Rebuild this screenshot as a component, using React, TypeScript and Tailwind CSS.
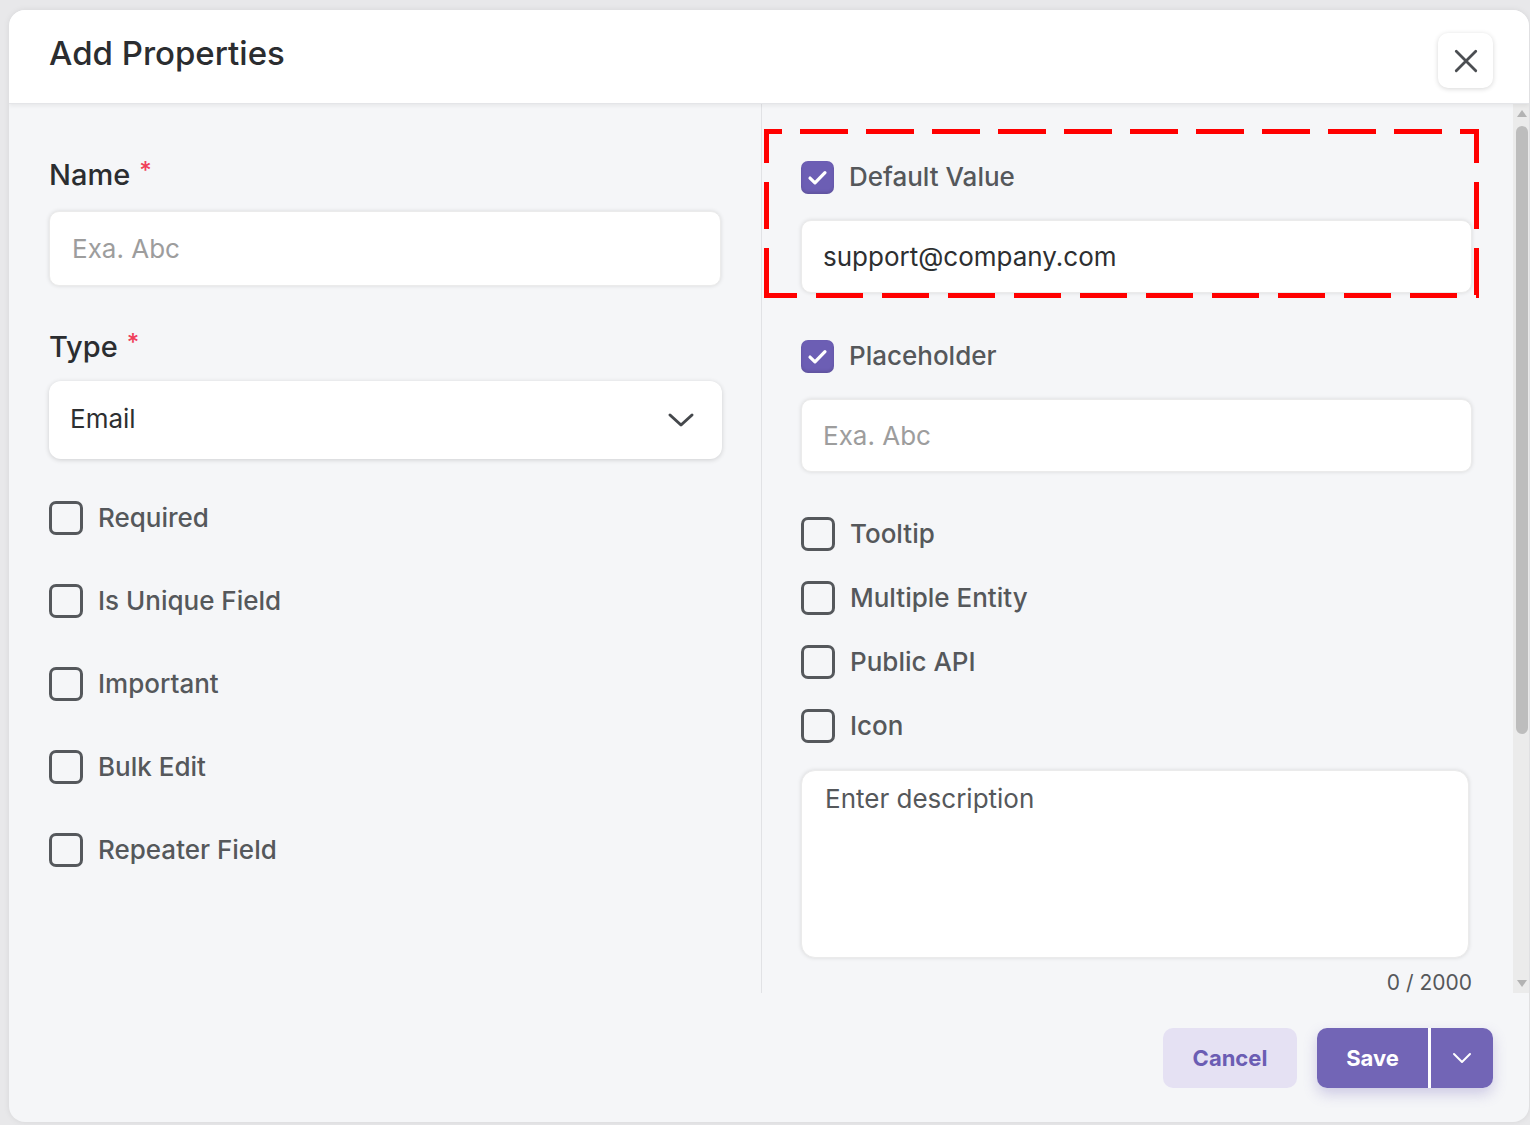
import { useState } from 'react'

const font = { fontFamily: 'Inter, "Noto Sans", sans-serif' }

function CheckIcon() {
  return (
    <svg className="w-[23px] h-[23px]" viewBox="0 0 20 20" fill="none" stroke="white" strokeWidth="2.8" strokeLinecap="round" strokeLinejoin="round">
      <path d="M3.5 10.5l4.3 4.2L16.5 5.8" />
    </svg>
  )
}

function Checkbox({ label, checked, onToggle }: { label: string; checked: boolean; onToggle: () => void }) {
  return (
    <button onClick={onToggle} className="flex items-center h-[34px] text-left">
      {checked ? (
        <span className="w-[33px] h-[33px] rounded-[7px] bg-[#6c5eb4] flex items-center justify-center shadow-[inset_0_-2px_3px_rgba(0,0,0,0.12)]">
          <CheckIcon />
        </span>
      ) : (
        <span className="w-[34px] h-[34px] rounded-[7px] border-[3px] border-[#55585c] bg-transparent" />
      )}
      <span className="ml-[15px] text-[26px] leading-[34px] font-medium text-[#55585b]">{label}</span>
    </button>
  )
}

function Field({ label }: { label: string }) {
  return (
    <div className="h-[36px] flex items-start text-[29px] leading-[36px] font-medium text-[#2b2d30]">
      {label}
      <span className="ml-[9px] text-[24px] leading-[28px] text-[#f0405a]">*</span>
    </div>
  )
}

export default function App() {
  const [checks, setChecks] = useState<Record<string, boolean>>({
    required: false,
    unique: false,
    important: false,
    bulk: false,
    repeater: false,
    defaultValue: true,
    placeholder: true,
    tooltip: false,
    multiple: false,
    publicApi: false,
    icon: false,
  })
  const toggle = (k: string) => setChecks(prev => ({ ...prev, [k]: !prev[k] }))

  const left = [
    { key: 'required', label: 'Required' },
    { key: 'unique', label: 'Is Unique Field' },
    { key: 'important', label: 'Important' },
    { key: 'bulk', label: 'Bulk Edit' },
    { key: 'repeater', label: 'Repeater Field' },
  ]
  const right = [
    { key: 'tooltip', label: 'Tooltip' },
    { key: 'multiple', label: 'Multiple Entity' },
    { key: 'publicApi', label: 'Public API' },
    { key: 'icon', label: 'Icon' },
  ]

  return (
    <div className="w-[1530px] h-[1125px] bg-[#e8e8ea] pt-[10px] pl-[9px] pr-[1px] pb-[3px] overflow-hidden" style={font}>
      <div className="h-[1112px] w-[1520px] rounded-[16px] bg-[#f5f6f8] overflow-hidden flex flex-col shadow-[0_0_6px_rgba(0,0,0,0.08)]">
        {/* Header */}
        <div className="h-[94px] shrink-0 bg-white border-b border-[#e4e5e8] shadow-[0_2px_4px_rgba(0,0,0,0.06)] flex items-center justify-between pl-[40px] pr-[36px] relative z-10">
          <h2 className="text-[33px] font-medium text-[#2b2d30] -mt-[6px]">Add Properties</h2>
          <button className="w-[55px] h-[55px] mt-[8px] rounded-[10px] bg-white shadow-[0_1px_5px_rgba(0,0,0,0.16)] flex items-center justify-center">
            <svg className="w-[26px] h-[26px]" viewBox="0 0 24 24" fill="none" stroke="#4b4e52" strokeWidth="2.6" strokeLinecap="round">
              <path d="M3 3l18 18M21 3L3 21" />
            </svg>
          </button>
        </div>

        {/* Body */}
        <div className="h-[889px] shrink-0 flex">
          <div className="pl-[40px] w-[712px] shrink-0 pt-[53px]">
            <Field label="Name" />
            <input
              placeholder="Exa. Abc"
              className="mt-[18px] w-[672px] h-[75px] rounded-[10px] bg-white border border-[#ebebeb] shadow-[0_0_4px_rgba(0,0,0,0.12)] px-[22px] text-[26px] text-[#2d2f31] placeholder:text-[#9d9d9d] outline-none"
            />
            <div className="mt-[43px]">
              <Field label="Type" />
            </div>
            <div className="mt-[16px] w-[673px] h-[78px] rounded-[12px] bg-white shadow-[0_1px_5px_rgba(0,0,0,0.16)] flex items-center justify-between pl-[21px] pr-[27px]">
              <span className="text-[26px] text-[#2d2f31] -mt-[4px]">Email</span>
              <svg className="w-[28px] h-[18px]" viewBox="0 0 28 18" fill="none" stroke="#45484c" strokeWidth="3" strokeLinecap="round" strokeLinejoin="round">
                <path d="M3 4l11 10L25 4" />
              </svg>
            </div>
            <div className="mt-[42px] flex flex-col gap-[49px]">
              {left.map(c => (
                <Checkbox key={c.key} label={c.label} checked={checks[c.key]} onToggle={() => toggle(c.key)} />
              ))}
            </div>
          </div>

          <div className="w-[40px] shrink-0" />
          <div className="w-px shrink-0 bg-[#e1e2e5]" />
          <div className="w-[39px] shrink-0" />

          <div className="w-[671px] shrink-0 pt-[56px] relative flex flex-col">
            {/* annotation frame */}
            <svg className="absolute left-[-37px] top-[25px] w-[715px] h-[169px] pointer-events-none z-10" viewBox="0 0 715 169" fill="none" stroke="#ff0000" strokeWidth="5">
              <path d="M0 2.5H715" strokeDasharray="48 18" strokeDashoffset="30" />
              <path d="M0 166.5H715" strokeDasharray="47 19" strokeDashoffset="14" />
              <path d="M2.5 0V169" strokeDasharray="47 19" strokeDashoffset="13" />
              <path d="M712.5 0V169" strokeDasharray="47 19" strokeDashoffset="13" />
            </svg>
            <Checkbox label="Default Value" checked={checks.defaultValue} onToggle={() => toggle('defaultValue')} />
            <input
              defaultValue="support@company.com"
              className="mt-[26px] w-[671px] h-[74px] rounded-[10px] bg-white border border-[#ebebeb] shadow-[0_0_4px_rgba(0,0,0,0.12)] px-[21px] text-[26px] text-[#2d2f31] outline-none"
            />
            <div className="mt-[46px]">
              <Checkbox label="Placeholder" checked={checks.placeholder} onToggle={() => toggle('placeholder')} />
            </div>
            <input
              placeholder="Exa. Abc"
              className="mt-[26px] w-[671px] h-[74px] rounded-[10px] bg-white border border-[#ebebeb] shadow-[0_0_4px_rgba(0,0,0,0.12)] px-[21px] text-[26px] text-[#2d2f31] placeholder:text-[#9d9d9d] outline-none"
            />
            <div className="mt-[45px] flex flex-col gap-[30px]">
              {right.map(c => (
                <Checkbox key={c.key} label={c.label} checked={checks[c.key]} onToggle={() => toggle(c.key)} />
              ))}
            </div>
            <textarea
              placeholder="Enter description"
              className="mt-[27px] w-[668px] h-[190px] rounded-[14px] bg-white border border-[#ebebeb] shadow-[0_0_4px_rgba(0,0,0,0.12)] px-[23px] py-[10px] text-[26px] leading-[36px] text-[#2d2f31] placeholder:text-[#55585b] outline-none resize-none"
            />
            <div className="mt-[15px] text-right text-[21px] leading-[20px] text-[#55585b]">0 / 2000</div>
          </div>

          <div className="w-[41px] shrink-0" />
          {/* scrollbar */}
          <div className="w-[17px] shrink-0 bg-[#ebebeb] flex flex-col items-center pt-[6px]">
            <svg className="w-[10px] h-[7px]" viewBox="0 0 10 7"><path d="M5 0L10 7H0z" fill="#b3b3b3" /></svg>
            <div className="mt-[9px] w-[12px] h-[608px] rounded-full bg-[#bdbdbd]" />
            <div className="flex-1" />
            <svg className="w-[10px] h-[7px] mb-[6px]" viewBox="0 0 10 7"><path d="M0 0H10L5 7z" fill="#b3b3b3" /></svg>
          </div>
        </div>

        {/* Footer */}
        <div className="flex-1 flex justify-end items-start pt-[35px] pr-[36px] gap-[20px]">
          <button className="w-[134px] h-[60px] rounded-[10px] bg-[#e5e1f3] text-[22px] font-bold text-[#6b5db3]">Cancel</button>
          <div className="flex h-[60px] rounded-[10px] overflow-hidden shadow-[0_6px_14px_rgba(114,101,182,0.3)]">
            <button className="w-[111px] h-full bg-[#7265b6] text-[22px] font-bold text-white">Save</button>
            <div className="w-[3px] bg-white" />
            <button className="w-[62px] h-full bg-[#7265b6] flex items-center justify-center">
              <svg className="w-[20px] h-[12px]" viewBox="0 0 20 12" fill="none" stroke="white" strokeWidth="2" strokeLinecap="round" strokeLinejoin="round">
                <path d="M2 2l8 8 8-8" />
              </svg>
            </button>
          </div>
        </div>
      </div>
    </div>
  )
}
